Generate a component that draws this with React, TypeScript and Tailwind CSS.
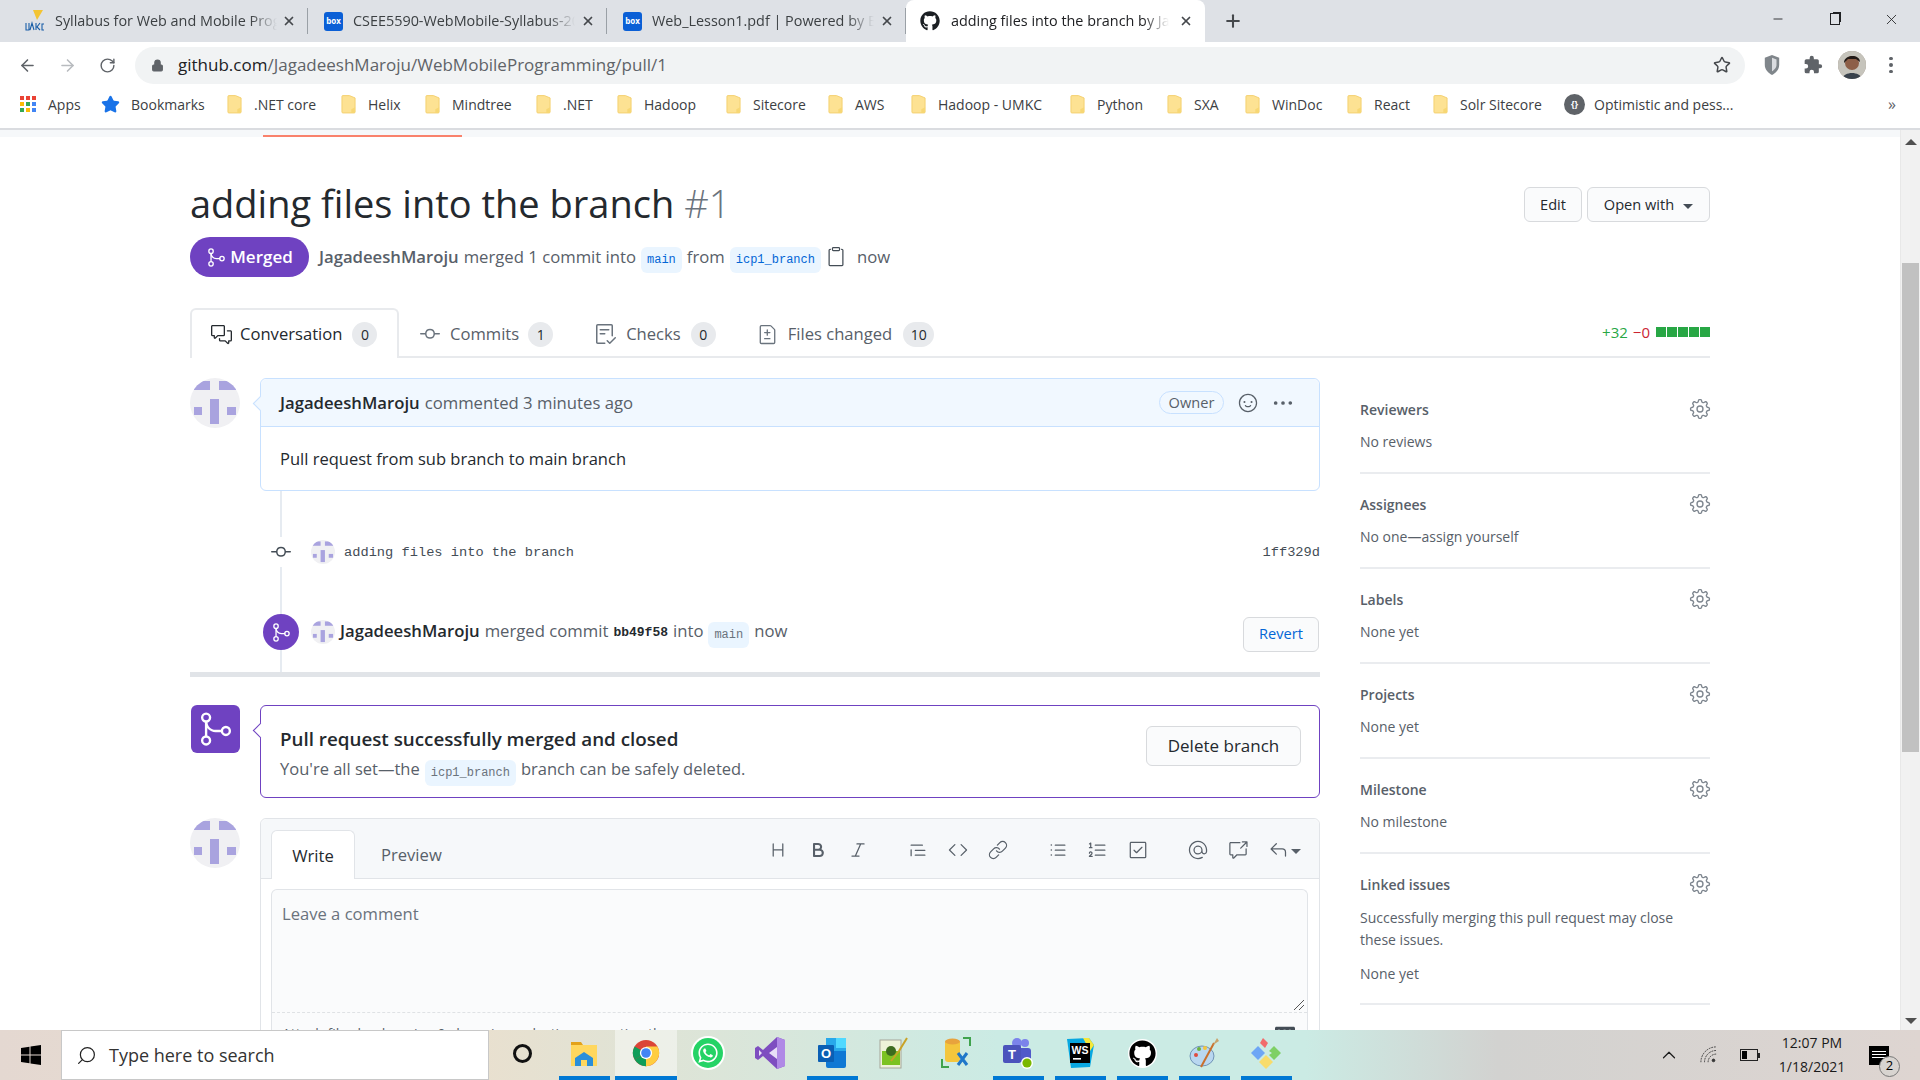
import type { ReactNode } from 'react'
import {
  GoBold, GoCheckbox, GoChecklist, GoCode, GoCommentDiscussion, GoCrossReference, GoFileDiff, GoGear, GoGitCommit, GoGitMerge,
  GoHeading, GoItalic, GoKebabHorizontal, GoLink, GoListOrdered, GoListUnordered,
  GoMention, GoPaste, GoQuote, GoReply, GoSmiley,
} from 'react-icons/go'
import { FaGithub, FaMarkdown, FaWhatsapp } from 'react-icons/fa'
import { ArrowLeft, ArrowRight, ChevronUp, Lock, Minus, Plus, RotateCw, Search, Star, X } from 'lucide-react'

const mono = "font-['Liberation_Mono',monospace]"

const Identicon = ({ size }: { size: string }) => (
  <div className={`${size} shrink-0 overflow-hidden rounded-full bg-[#f0f0f3]`}>
    <svg viewBox="0 0 50 50" className="h-full w-full" fill="#a9a3df">
      <rect x="4" y="3" width="16" height="9" />
      <rect x="29" y="3" width="17" height="9" />
      <rect x="20" y="21" width="9" height="25" />
      <rect x="4" y="29" width="8" height="8" />
      <rect x="37" y="29" width="9" height="8" />
    </svg>
  </div>
)

const Pill = ({ children, dim }: { children: string; dim?: boolean }) => (
  <span
    className={`${mono} inline-flex h-[26px] translate-y-[1px] items-center rounded-md bg-[#eaf5ff] px-[6px] text-[12px] ${dim ? 'text-[#6a737d]' : 'text-[#0366d6]'}`}
  >
    {children}
  </span>
)

const Counter = ({ n, w }: { n: string; w: string }) => (
  <span className={`${w} flex h-[25px] items-center justify-center rounded-full bg-[#e8eaed] text-[14px] text-[#24292e]`}>{n}</span>
)

const BoxFavicon = () => (
  <div className="flex h-[19px] w-[19px] shrink-0 items-center justify-center rounded-[3px] bg-[#0a5fd6] text-[8px] font-bold leading-none text-white">
    box
  </div>
)

const UmkcFavicon = () => (
  <svg viewBox="0 0 20 24" className="h-[24px] w-[20px] shrink-0">
    <path d="M8 1 L18 1 L12 11 Z" fill="#f3c433" />
    <path d="M1 14 V21 H4 V14 M5 21 L7 14 L9 21 M11 14 V21 M15 14 L12 18 L15 21 M19 15 H17 V21 H19" stroke="#1a5fa8" strokeWidth="1.1" fill="none" />
  </svg>
)

const chromeTabs = [
  { title: 'Syllabus for Web and Mobile Programming', icon: <UmkcFavicon /> },
  { title: 'CSEE5590-WebMobile-Syllabus-2021', icon: <BoxFavicon /> },
  { title: 'Web_Lesson1.pdf | Powered by Box', icon: <BoxFavicon /> },
]

const TabStrip = () => (
  <div className="flex h-[42px] shrink-0 bg-[#dee1e6] pl-[9px] text-[14.4px] text-[#3c4043]">
    {chromeTabs.map((t) => (
      <div key={t.title} className="flex h-[42px] w-[299px] items-center pl-[16px]">
        {t.icon}
        <span className="ml-[10px] w-[222px] overflow-hidden whitespace-nowrap [mask-image:linear-gradient(to_right,black_88%,transparent)]">
          {t.title}
        </span>
        <X size={14} strokeWidth={3} className="ml-auto text-[#45484c]" />
        <div className="ml-[11px] h-[26px] w-px shrink-0 bg-[#9aa0a6]" />
      </div>
    ))}
    <div className="flex h-[42px] w-[299px] items-center rounded-t-lg bg-white pl-[14px] pr-[12px] text-[#202124]">
      <FaGithub size={20} className="shrink-0 text-[#1b1f23]" />
      <span className="ml-[11px] w-[218px] overflow-hidden whitespace-nowrap [mask-image:linear-gradient(to_right,black_88%,transparent)]">
        adding files into the branch by Jagadeesh
      </span>
      <X size={14} strokeWidth={3} className="ml-auto text-[#45484c]" />
    </div>
    <Plus size={20} strokeWidth={2.5} className="ml-[18px] mt-[11px] text-[#45484c]" />
    <div className="ml-auto flex text-[#202124]">
      <div className="flex w-[57px] items-center justify-center pb-[4px]"><Minus size={14} strokeWidth={1.5} /></div>
      <div className="flex w-[57px] items-center justify-center pb-[4px]">
        <div className="h-[12px] w-[10px] border-[1.5px] border-[#202124] shadow-[2px_-2px_0_-1px_#202124]" />
      </div>
      <div className="flex w-[57px] items-center justify-center pb-[4px]"><X size={17} strokeWidth={1.2} /></div>
    </div>
  </div>
)

const AddressBar = () => (
  <div className="flex h-[46px] shrink-0 items-center bg-white pl-[7px] text-[#5f6368]">
    <div className="flex w-[40px] justify-center"><ArrowLeft size={19} /></div>
    <div className="flex w-[40px] justify-center text-[#b8bbbf]"><ArrowRight size={19} /></div>
    <div className="flex w-[40px] justify-center"><RotateCw size={17} /></div>
    <div className="ml-[8px] flex h-[37px] w-[1610px] items-center rounded-full bg-[#f1f3f4] pl-[16px] pr-[14px]">
      <Lock size={13} fill="#5f6368" className="shrink-0" />
      <span className="ml-[14px] text-[17px] text-[#5f6368]">
        <span className="text-[#202124]">github.com</span>/JagadeeshMaroju/WebMobileProgramming/pull/1
      </span>
      <Star size={18} className="ml-auto text-[#45484c]" />
    </div>
    <svg viewBox="0 0 20 24" className="ml-[18px] h-[22px] w-[18px]">
      <path d="M10 1 L18 4 V12 C18 17 14 21 10 23 C6 21 2 17 2 12 V4 Z" fill="#80868b" />
      <path d="M10 4 L15 6 V12 C15 15 12 18 10 19 Z" fill="#dadce0" />
    </svg>
    <svg viewBox="0 0 24 24" className="ml-[22px] h-[20px] w-[20px]" fill="#5f6368">
      <path d="M20.5 11H19V7a2 2 0 0 0-2-2h-4V3.5a2.5 2.5 0 0 0-5 0V5H4a2 2 0 0 0-2 2v3.8h1.5a2.7 2.7 0 0 1 0 5.4H2V20a2 2 0 0 0 2 2h3.8v-1.5a2.7 2.7 0 0 1 5.4 0V22H17a2 2 0 0 0 2-2v-4h1.5a2.5 2.5 0 0 0 0-5z" />
    </svg>
    <div className="ml-[15px] flex h-[28px] w-[28px] items-center justify-center overflow-hidden rounded-full bg-[#9c8f85]">
      <svg viewBox="0 0 28 28" className="h-full w-full">
        <rect width="28" height="28" fill="#c6c4bc" />
        <circle cx="14" cy="12" r="7" fill="#8d5f48" />
        <path d="M6 12 C6 3 22 3 22 11 L18 8 L10 8 Z" fill="#221a17" />
        <path d="M4 28 C6 20 22 20 24 28 Z" fill="#39424c" />
      </svg>
    </div>
    <div className="ml-[23px] flex flex-col gap-[3px]">
      <div className="h-[3.5px] w-[3.5px] rounded-full bg-[#5f6368]" />
      <div className="h-[3.5px] w-[3.5px] rounded-full bg-[#5f6368]" />
      <div className="h-[3.5px] w-[3.5px] rounded-full bg-[#5f6368]" />
    </div>
  </div>
)

const Folder = () => (
  <svg viewBox="0 0 16 20" className="h-[19px] w-[15px] shrink-0">
    <path d="M1 1.5 A1 1 0 0 1 2 .5 H9 L15 3 V18 A1 1 0 0 1 14 19 H2 A1 1 0 0 1 1 18 Z" fill="#fde293" stroke="#f3cf6d" />
    <path d="M15 13 V18 A1 1 0 0 1 14 19 H11 V15 Z" fill="#f7d774" />
  </svg>
)

const bookmarks = [
  { name: '.NET core', w: 'w-[114px]' },
  { name: 'Helix', w: 'w-[84px]' },
  { name: 'Mindtree', w: 'w-[111px]' },
  { name: '.NET', w: 'w-[81px]' },
  { name: 'Hadoop', w: 'w-[109px]' },
  { name: 'Sitecore', w: 'w-[102px]' },
  { name: 'AWS', w: 'w-[83px]' },
  { name: 'Hadoop - UMKC', w: 'w-[159px]' },
  { name: 'Python', w: 'w-[97px]' },
  { name: 'SXA', w: 'w-[78px]' },
  { name: 'WinDoc', w: 'w-[102px]' },
  { name: 'React', w: 'w-[86px]' },
  { name: 'Solr Sitecore', w: 'w-[131px]' },
]

const BookmarksBar = () => (
  <div className="flex h-[42px] shrink-0 items-center border-b-2 border-[#dadce0] bg-white pb-[8px] pl-[20px] text-[14px] text-[#3c4043]">
    <div className="flex w-[81px] shrink-0 items-center">
      <div className="grid grid-cols-3 gap-[2px]">
        {['#ea4335', '#ea4335', '#ea4335', '#fbbc04', '#34a853', '#4285f4', '#34a853', '#fbbc04', '#4285f4'].map((c, i) => (
          <svg key={i} viewBox="0 0 4 4" className="h-[4px] w-[4px]"><rect width="4" height="4" fill={c} /></svg>
        ))}
      </div>
      <span className="ml-[12px]">Apps</span>
    </div>
    <div className="flex w-[126px] shrink-0 items-center">
      <Star size={19} fill="#1a73e8" className="shrink-0 text-[#1a73e8]" />
      <span className="ml-[11px]">Bookmarks</span>
    </div>
    {bookmarks.map((b) => (
      <div key={b.name} className={`flex ${b.w} shrink-0 items-center whitespace-nowrap`}>
        <Folder />
        <span className="ml-[12px]">{b.name}</span>
      </div>
    ))}
    <div className="flex shrink-0 items-center whitespace-nowrap">
      <div className="flex h-[21px] w-[21px] items-center justify-center rounded-full bg-[#5f6368] text-[9px] font-bold text-white">{'{}'}</div>
      <span className="ml-[9px]">Optimistic and pess...</span>
    </div>
    <span className="ml-auto mr-[24px] text-[16px] text-[#5f6368]">»</span>
  </div>
)

const PageHeader = () => (
  <div>
    <div className="flex items-start justify-between pt-[42px]">
      <h1 className="h-[48px] text-[38px] font-normal leading-[48px] text-[#24292e]">
        adding files into the branch <span className="font-light text-[#6a737d]">#1</span>
      </h1>
      <div className="mt-[8px] flex gap-[5px] text-[14.6px] text-[#24292e]">
        <div className="flex h-[35px] w-[58px] items-center justify-center rounded-md border border-[#d8dadd] bg-[#fafbfc] font-medium">Edit</div>
        <div className="flex h-[35px] w-[123px] items-center justify-center gap-[9px] rounded-md border border-[#d8dadd] bg-[#fafbfc] font-medium">
          Open with
          <div className="mt-[3px] h-0 w-0 border-x-[5px] border-t-[5px] border-x-transparent border-t-[#444d56]" />
        </div>
      </div>
    </div>
    <div className="mt-[10px] flex h-[40px] items-center text-[16.7px] text-[#586069]">
      <div className="flex h-[40px] w-[119px] items-center justify-center gap-[3px] rounded-full bg-[#6f42c1] text-[17px] font-semibold text-white">
        <GoGitMerge size={21} />
        Merged
      </div>
      <span className="ml-[10px] font-semibold text-[#586069]">JagadeeshMaroju</span>
      <span className="ml-[5px]">merged 1 commit into</span>
      <span className="ml-[5px]"><Pill>main</Pill></span>
      <span className="ml-[5px]">from</span>
      <span className="ml-[5px]"><Pill>icp1_branch</Pill></span>
      <GoPaste size={20} className="ml-[5px] text-[#444d56]" />
      <span className="ml-[11px]">now</span>
    </div>
  </div>
)

const PrTabs = () => (
  <div className="mt-[31px] flex h-[50px] items-end border-b-2 border-[#e8eaed] text-[16.6px] text-[#586069]">
    <div className="-mb-[2px] flex h-[50px] w-[209px] items-center rounded-t-md border-x-2 border-t-2 border-[#e8eaed] bg-white pl-[19px] text-[#24292e]">
      <GoCommentDiscussion size={21} className="text-[#24292e]" />
      <span className="ml-[8px]">Conversation</span>
      <span className="ml-[10px]"><Counter n="0" w="w-[25px]" /></span>
    </div>
    <div className="-mb-[2px] flex h-[50px] items-center pt-[2px]">
      <GoGitCommit size={24} className="ml-[19px] text-[#6a737d]" />
      <span className="ml-[8px]">Commits</span>
      <span className="ml-[9px]"><Counter n="1" w="w-[25px]" /></span>
      <GoChecklist size={24} className="ml-[41px] text-[#6a737d]" />
      <span className="ml-[8px]">Checks</span>
      <span className="ml-[10px]"><Counter n="0" w="w-[25px]" /></span>
      <GoFileDiff size={21} className="ml-[41px] text-[#6a737d]" />
      <span className="ml-[10px]">Files changed</span>
      <span className="ml-[11px]"><Counter n="10" w="w-[31px]" /></span>
    </div>
    <div className="ml-auto flex h-[44px] items-center self-start pt-[4px] text-[15px]">
      <span className="text-[#28a745]">+32</span>
      <span className="ml-[5px] text-[#cb2431]">−0</span>
      <div className="ml-[6px] flex gap-px">
        <div className="h-[10px] w-[10px] bg-[#28a745]" />
        <div className="h-[10px] w-[10px] bg-[#28a745]" />
        <div className="h-[10px] w-[10px] bg-[#28a745]" />
        <div className="h-[10px] w-[10px] bg-[#28a745]" />
        <div className="h-[10px] w-[10px] bg-[#28a745]" />
      </div>
    </div>
  </div>
)

const Caret = ({ tone }: { tone: string }) => (
  <div className={`absolute -left-[6px] top-[19px] h-[11px] w-[11px] rotate-45 border-b border-l ${tone}`} />
)

const Timeline = () => (
  <div className="ml-[90px] flex h-[181px] flex-col border-l-2 border-[#e6ebf1]">
    <div className="mt-[46px] flex h-[30px] items-center">
      <div className="-ml-[13px] flex h-[30px] w-[24px] items-center justify-center bg-white">
        <GoGitCommit size={24} className="text-[#444d56]" />
      </div>
      <div className="ml-[18px]"><Identicon size="h-[24px] w-[24px]" /></div>
      <span className={`${mono} ml-[9px] mt-[2px] text-[13.7px] text-[#444d56]`}>adding files into the branch</span>
      <span className={`${mono} ml-auto mt-[2px] text-[13.7px] text-[#444d56]`}>1ff329d</span>
    </div>
    <div className="mt-[47px] flex h-[36px] items-center text-[16.7px] text-[#586069]">
      <div className="-ml-[19px] flex h-[36px] w-[36px] items-center justify-center rounded-full bg-[#6f42c1] text-white">
        <GoGitMerge size={21} />
      </div>
      <div className="ml-[12px]"><Identicon size="h-[24px] w-[24px]" /></div>
      <span className="ml-[5px] -mt-[2px] font-semibold text-[#24292e]">JagadeeshMaroju</span>
      <span className="ml-[5px] -mt-[2px]">merged commit</span>
      <span className={`${mono} ml-[5px] mt-[2px] text-[13px] font-bold text-[#24292e]`}>bb49f58</span>
      <span className="ml-[5px] -mt-[2px]">into</span>
      <span className="ml-[5px]"><Pill dim>main</Pill></span>
      <span className="ml-[5px] -mt-[2px]">now</span>
      <div className="ml-auto mr-px mt-[4px] flex h-[35px] w-[76px] items-center justify-center rounded-md border border-[#d8dadd] bg-[#fafbfc] text-[14.6px] font-medium text-[#0366d6]">
        Revert
      </div>
    </div>
  </div>
)

const CommentBox = () => (
  <div className="mt-[20px] flex gap-[20px]">
    <Identicon size="h-[50px] w-[50px]" />
    <div className="relative h-[113px] flex-1 rounded-md border border-[#c8e1ff] bg-white">
      <Caret tone="border-[#c8e1ff] bg-[#f1f8ff]" />
      <div className="relative flex h-[48px] items-center rounded-t-md border-b border-[#c8e1ff] bg-[#f1f8ff] pl-[19px] pr-[25px] text-[16.7px] text-[#586069]">
        <span className="font-semibold text-[#24292e]">JagadeeshMaroju</span>
        <span className="ml-[5px]">commented 3 minutes ago</span>
        <span className="ml-auto flex h-[23px] w-[65px] items-center justify-center rounded-full border border-[#c8e1ff] text-[14.6px] font-medium">Owner</span>
        <GoSmiley size={20} className="ml-[14px] text-[#586069]" />
        <GoKebabHorizontal size={22} className="ml-[14px] text-[#586069]" />
      </div>
      <p className="pl-[19px] pt-[20px] text-[16.5px] leading-[24px] text-[#24292e]">Pull request from sub branch to main branch</p>
    </div>
  </div>
)

const MergedBox = () => (
  <div className="mt-[28px] flex gap-[20px]">
    <div className="ml-px flex h-[48px] w-[49px] shrink-0 items-center justify-center rounded-md bg-[#6f42c1] text-white">
      <GoGitMerge size={38} />
    </div>
    <div className="relative flex h-[93px] flex-1 items-center justify-between rounded-md border border-[#6f42c1] bg-white pl-[19px] pr-[18px]">
      <Caret tone="border-[#6f42c1] bg-white" />
      <div className="relative pt-[5px]">
        <div className="text-[18.8px] font-semibold leading-[26px] text-[#24292e]">Pull request successfully merged and closed</div>
        <div className="mt-[4px] flex h-[26px] items-center gap-[5px] text-[16.5px] text-[#586069]">
          You&apos;re all set—the
          <span className="mt-[3px]"><Pill dim>icp1_branch</Pill></span>
          branch can be safely deleted.
        </div>
      </div>
      <div className="mb-[12px] flex h-[40px] w-[155px] items-center justify-center rounded-md border border-[#d8dadd] bg-[#fafbfc] text-[17px] font-medium text-[#24292e]">
        Delete branch
      </div>
    </div>
  </div>
)

const ToolButton = ({ children }: { children: ReactNode }) => (
  <div className="flex w-[40px] items-center justify-center text-[#586069]">{children}</div>
)

const Editor = () => (
  <div className="mt-[20px] flex gap-[20px]">
    <Identicon size="h-[50px] w-[50px]" />
    <div className="relative h-[260px] flex-1 rounded-md border border-[#e1e4e8] bg-white">
      <div className="flex h-[60px] items-end rounded-t-md border-b border-[#e1e4e8] bg-[#f6f8fa] pl-[10px] pr-[21px]">
        <div className="-mb-px flex h-[49px] w-[84px] items-center justify-center rounded-t-md border-x border-t border-[#e1e4e8] bg-white pt-[2px] text-[16.6px] text-[#24292e]">Write</div>
        <div className="ml-[26px] flex h-[49px] items-center pt-[3px] text-[16.6px] text-[#586069]">Preview</div>
        <div className="ml-auto flex h-[49px] items-start pt-[11px]">
          <div className="flex h-[20px] gap-[20px]">
            <div className="flex">
              <ToolButton><GoHeading size={20} /></ToolButton>
              <ToolButton><GoBold size={20} /></ToolButton>
              <ToolButton><GoItalic size={20} /></ToolButton>
            </div>
            <div className="flex">
              <ToolButton><GoQuote size={20} /></ToolButton>
              <ToolButton><GoCode size={20} /></ToolButton>
              <ToolButton><GoLink size={20} /></ToolButton>
            </div>
            <div className="flex">
              <ToolButton><GoListUnordered size={20} /></ToolButton>
              <ToolButton><GoListOrdered size={20} /></ToolButton>
              <ToolButton><GoCheckbox size={20} /></ToolButton>
            </div>
            <div className="flex">
              <ToolButton><GoMention size={20} /></ToolButton>
              <ToolButton><GoCrossReference size={20} /></ToolButton>
              <ToolButton>
                <div className="ml-[12px] flex items-center gap-[3px]">
                  <GoReply size={20} />
                  <div className="mt-[3px] h-0 w-0 border-x-[5px] border-t-[5px] border-x-transparent border-t-[#586069]" />
                </div>
              </ToolButton>
            </div>
          </div>
        </div>
      </div>
      <div className="ml-[10px] mr-[11px] mt-[10px] rounded-t-md border-x border-t border-[#e1e4e8] bg-[#fafbfc]">
        <div className="relative h-[123px] border-b border-dashed border-[#dfe2e5] pl-[10px] pt-[12px] text-[16.6px] text-[#6a737d]">
          Leave a comment
          <svg viewBox="0 0 10 10" className="absolute bottom-[2px] right-[3px] h-[10px] w-[10px]" stroke="#555" fill="none">
            <path d="M0 10 L10 0 M5 10 L10 5" />
          </svg>
        </div>
        <div className="flex items-start justify-between px-[10px] pt-[10px] text-[14px] text-[#586069]">
          <span>Attach files by dragging &amp; dropping, selecting or pasting them.</span>
          <FaMarkdown size={20} className="mr-[2px] text-[#444d56]" />
        </div>
      </div>
    </div>
  </div>
)

const sections = [
  { title: 'Reviewers', text: 'No reviews' },
  { title: 'Assignees', text: 'No one—assign yourself' },
  { title: 'Labels', text: 'None yet' },
  { title: 'Projects', text: 'None yet' },
  { title: 'Milestone', text: 'No milestone' },
]

const Sidebar = () => (
  <div className="ml-[40px] w-[350px] pt-[21px] text-[14px] text-[#586069]">
    {sections.map((s) => (
      <div key={s.title} className="h-[95px] border-b-2 border-[#eaecef] pt-[18px]">
        <div className="flex h-[24px] items-center justify-between">
          <span className="font-semibold">{s.title}</span>
          <GoGear size={22} className="-mr-[1px] text-[#7f8790]" />
        </div>
        <div className="mt-[9px] leading-[24px]">{s.text}</div>
      </div>
    ))}
    <div className="h-[151px] border-b-2 border-[#eaecef] pt-[18px]">
      <div className="flex h-[24px] items-center justify-between">
        <span className="font-semibold">Linked issues</span>
        <GoGear size={22} className="-mr-[1px] text-[#7f8790]" />
      </div>
      <p className="mt-[11px] w-[340px] leading-[22px]">Successfully merging this pull request may close these issues.</p>
      <div className="mt-[11px] leading-[24px]">None yet</div>
    </div>
  </div>
)

const Scrollbar = () => (
  <div className="flex w-[20px] shrink-0 flex-col items-center border-l border-[#e8e8e8] bg-[#f1f1f1]">
    <div className="mt-[9px] h-0 w-0 border-x-[6px] border-b-[6px] border-x-transparent border-b-[#505050]" />
    <div className="mt-[118px] h-[489px] w-[17px] bg-[#c1c1c1]" />
    <div className="mt-auto mb-[6px] h-0 w-0 border-x-[6px] border-t-[6px] border-x-transparent border-t-[#505050]" />
  </div>
)

const Chrome = () => (
  <svg viewBox="0 0 32 32" className="h-[28px] w-[28px]">
    <circle cx="16" cy="16" r="15" fill="#db4437" />
    <path d="M16 16 L3 23.5 A15 15 0 0 1 3 8.5 Z" fill="#0f9d58" />
    <path d="M16 16 L3 23.5 A15 15 0 0 0 16 31 Z" fill="#0f9d58" />
    <path d="M16 16 L16 31 A15 15 0 0 0 29 8.5 L16 8.5 Z" fill="#ffcd40" />
    <circle cx="16" cy="16" r="7" fill="#fff" />
    <circle cx="16" cy="16" r="5.5" fill="#4285f4" />
  </svg>
)

const appIcons: { icon: ReactNode; open: boolean; active?: boolean }[] = [
  { icon: <div className="h-[19px] w-[19px] rounded-full border-[3px] border-[#111]" />, open: false },
  {
    icon: (
      <svg viewBox="0 0 28 28" className="h-[28px] w-[28px]">
        <path d="M1 3 H11 L13 6 H1 Z" fill="#e3a21a" />
        <rect x="1" y="6" width="26" height="21" fill="#ffd75e" />
        <path d="M5 27 V19 L14 13 L23 19 V27 H17 V21 H11 V27 Z" fill="#2b8fd9" />
      </svg>
    ),
    open: true,
  },
  { icon: <Chrome />, open: true, active: true },
  {
    icon: (
      <div className="flex h-[30px] w-[30px] items-center justify-center rounded-full bg-[#25d366] text-white ring-2 ring-white">
        <FaWhatsapp size={22} />
      </div>
    ),
    open: false,
  },
  {
    icon: (
      <svg viewBox="0 0 30 34" className="h-[34px] w-[30px]">
        <path d="M22 1 L30 4 V30 L22 33 L8 20 L3 24 L0 22 V12 L3 10 L8 14 Z" fill="#7e4dc0" />
        <path d="M22 1 L30 4 V30 L22 33 Z" fill="#b089e6" />
        <path d="M4 14 V20 L7 17 Z M22 11 L14 17 L22 23 Z" fill="#e8def7" />
      </svg>
    ),
    open: false,
  },
  {
    icon: (
      <svg viewBox="0 0 30 32" className="h-[32px] w-[30px]">
        <rect x="9" y="1" width="20" height="20" fill="#28a8ea" />
        <rect x="19" y="1" width="10" height="10" fill="#50d9ff" />
        <path d="M9 14 H29 V29 A2 2 0 0 1 27 31 H11 A2 2 0 0 1 9 29 Z" fill="#0f78d4" />
        <rect x="1" y="8" width="16" height="17" rx="1" fill="#0a5fb4" />
        <text x="9" y="21" fontSize="13" fontWeight="700" textAnchor="middle" fill="#fff" fontFamily="Liberation Sans">O</text>
      </svg>
    ),
    open: true,
  },
  {
    icon: (
      <svg viewBox="0 0 30 32" className="h-[32px] w-[30px]">
        <rect x="1" y="3" width="21" height="28" fill="#eef2d8" stroke="#a6a69a" />
        <rect x="3" y="14" width="18" height="14" fill="#7cc221" />
        <circle cx="12" cy="14" r="5" fill="#3d6b1f" />
        <path d="M12 24 L20 14 M20 14 L28 1" stroke="#c9a227" strokeWidth="2" />
      </svg>
    ),
    open: false,
  },
  {
    icon: (
      <svg viewBox="0 0 30 32" className="h-[32px] w-[30px]">
        <rect x="4" y="3" width="15" height="22" rx="3" fill="#f4c63d" />
        <ellipse cx="11.5" cy="4.5" rx="7.5" ry="3" fill="#e8a33d" />
        <path d="M17 28 L26 16 M26 28 L17 16" stroke="#1f77c9" strokeWidth="3" />
        <path d="M1 22 V30 H8 M22 1 H29 V9" stroke="#3fa34d" strokeWidth="2" fill="none" />
      </svg>
    ),
    open: false,
  },
  {
    icon: (
      <svg viewBox="0 0 32 32" className="h-[32px] w-[32px]">
        <circle cx="23" cy="6" r="4" fill="#7b83eb" />
        <circle cx="15" cy="6" r="5" fill="#7b83eb" />
        <rect x="12" y="11" width="17" height="14" rx="3" fill="#5059c9" />
        <rect x="1" y="8" width="18" height="18" rx="2" fill="#4b53bc" />
        <text x="10" y="22" fontSize="13" fontWeight="700" textAnchor="middle" fill="#fff" fontFamily="Liberation Sans">T</text>
        <circle cx="25" cy="26" r="6" fill="#fff" />
        <circle cx="25" cy="26" r="4.6" fill="#7ab800" />
      </svg>
    ),
    open: true,
  },
  {
    icon: (
      <svg viewBox="0 0 30 32" className="h-[32px] w-[30px]">
        <path d="M2 2 L24 1 L29 8 L25 30 L6 31 Z" fill="#08a7e0" />
        <path d="M18 1 L24 1 L29 8 L25 14 Z" fill="#f5e83a" />
        <rect x="5" y="6" width="20" height="20" fill="#000" />
        <text x="15" y="17" fontSize="10.5" fontWeight="700" textAnchor="middle" fill="#fff" fontFamily="Liberation Sans">WS</text>
        <rect x="8" y="21" width="8" height="1.6" fill="#fff" />
      </svg>
    ),
    open: true,
  },
  {
    icon: (
      <div className="flex h-[29px] w-[29px] items-center justify-center rounded-full bg-white">
        <FaGithub size={27} className="text-black" />
      </div>
    ),
    open: true,
  },
  {
    icon: (
      <svg viewBox="0 0 32 32" className="h-[32px] w-[32px]">
        <ellipse cx="14" cy="19" rx="12" ry="10" fill="#b9d7f0" stroke="#6f93b5" />
        <circle cx="8" cy="18" r="2" fill="#e04b3f" />
        <circle cx="11" cy="12" r="2" fill="#6cb33f" />
        <circle cx="17" cy="11" r="2" fill="#f4c63d" />
        <path d="M13 30 L26 6" stroke="#c9702c" strokeWidth="2" />
        <path d="M25 8 L29 1 L31 4 Z" fill="#c9a36b" />
      </svg>
    ),
    open: true,
  },
  {
    icon: (
      <svg viewBox="0 0 30 32" className="h-[32px] w-[30px]">
        <path d="M7 9 L14 16 L7 23 L0 16 Z" fill="#6ea6f5" />
        <path d="M12 1 L17 6 L14 11 L9 6 Z" fill="#f26b6b" />
        <path d="M23 9 L30 16 L23 23 L18 18 L21 16 L18 14 Z" fill="#7fd065" />
        <path d="M15 18 L22 25 L15 32 L8 25 Z" fill="#f8dc6b" />
      </svg>
    ),
    open: true,
  },
]

const Taskbar = () => (
  <div className="flex h-[50px] shrink-0 items-stretch bg-[linear-gradient(90deg,#e4d8d1_0%,#e9e0cf_25%,#cbebe4_52%,#cbebe4_68%,#d2d2d0_78%,#ded5d1_100%)]">
    <div className="flex w-[61px] items-center justify-center">
      <svg viewBox="0 0 20 20" className="h-[20px] w-[20px]" fill="#000">
        <path d="M0 3 L8.5 1.8 V9.5 H0 Z M9.5 1.6 L20 0 V9.5 H9.5 Z M0 10.5 H8.5 V18.2 L0 17 Z M9.5 10.5 H20 V20 L9.5 18.4 Z" />
      </svg>
    </div>
    <div className="flex w-[428px] items-center border border-[#c8c8c8] bg-white pl-[14px] text-[18px] text-[#333]">
      <Search size={21} strokeWidth={1.4} className="-scale-x-100 text-[#222]" />
      <span className="ml-[12px]">Type here to search</span>
    </div>
    <div className="ml-[2px] flex">
      {appIcons.map((a, i) => (
        <div key={i} className={`flex w-[62px] flex-col items-center ${a.active ? 'bg-white/45' : ''}`}>
          <div className="flex flex-1 items-center justify-center">{a.icon}</div>
          <div className={`h-[4px] ${a.active ? 'w-[62px]' : 'w-[51px]'} ${a.open ? 'bg-[#0078d4]' : ''}`} />
        </div>
      ))}
    </div>
    <div className="ml-auto flex items-center text-[#1a1a1a]">
      <ChevronUp size={22} strokeWidth={1.3} />
      <svg viewBox="0 0 20 20" className="ml-[20px] h-[18px] w-[18px]" fill="none" stroke="#333" strokeWidth="1">
        <path d="M1 18 A17 17 0 0 1 18 1 M5 18 A13 13 0 0 1 18 5 M9 18 A9 9 0 0 1 18 9" strokeDasharray="2 1" />
        <circle cx="15" cy="16" r="1.5" fill="#333" />
      </svg>
      <div className="ml-[22px] flex items-center">
        <div className="flex h-[12px] w-[18px] border border-[#222] p-[1px]"><div className="h-full w-[5px] bg-black" /></div>
        <div className="h-[5px] w-[2px] bg-[#222]" />
      </div>
      <div className="ml-[8px] w-[88px] text-center text-[14px] leading-[24px]">
        <div>12:07 PM</div>
        <div>1/18/2021</div>
      </div>
      <div className="relative ml-[13px] mr-[31px] flex h-[19px] w-[20px] flex-col justify-center gap-[2px] bg-black px-[3px] pb-[2px]">
        <div className="h-px bg-white" />
        <div className="h-px bg-white" />
        <div className="h-px bg-white" />
        <div className="absolute -right-[11px] top-[10px] flex h-[21px] w-[21px] items-center justify-center rounded-full border border-[#777] bg-[#d8d4d0] text-[13px] text-black">2</div>
      </div>
    </div>
  </div>
)

export default function App() {
  return (
    <div className="flex h-screen w-[1920px] flex-col overflow-hidden bg-white font-['Open_Sans',sans-serif]">
      <TabStrip />
      <AddressBar />
      <BookmarksBar />
      <div className="flex min-h-0 flex-1">
        <div className="min-w-0 flex-1 overflow-hidden">
          <div className="flex h-[7px] items-end bg-[#f6f8fa]">
            <div className="ml-[263px] h-[2px] w-[199px] bg-[#f9826c]" />
          </div>
          <div className="ml-[190px] w-[1520px]">
            <PageHeader />
            <PrTabs />
            <div className="flex">
              <div className="w-[1130px] shrink-0">
                <CommentBox />
                <Timeline />
                <div className="h-[5px] bg-[#e1e4e8]" />
                <MergedBox />
                <Editor />
              </div>
              <Sidebar />
            </div>
          </div>
        </div>
        <Scrollbar />
      </div>
      <Taskbar />
    </div>
  )
}
